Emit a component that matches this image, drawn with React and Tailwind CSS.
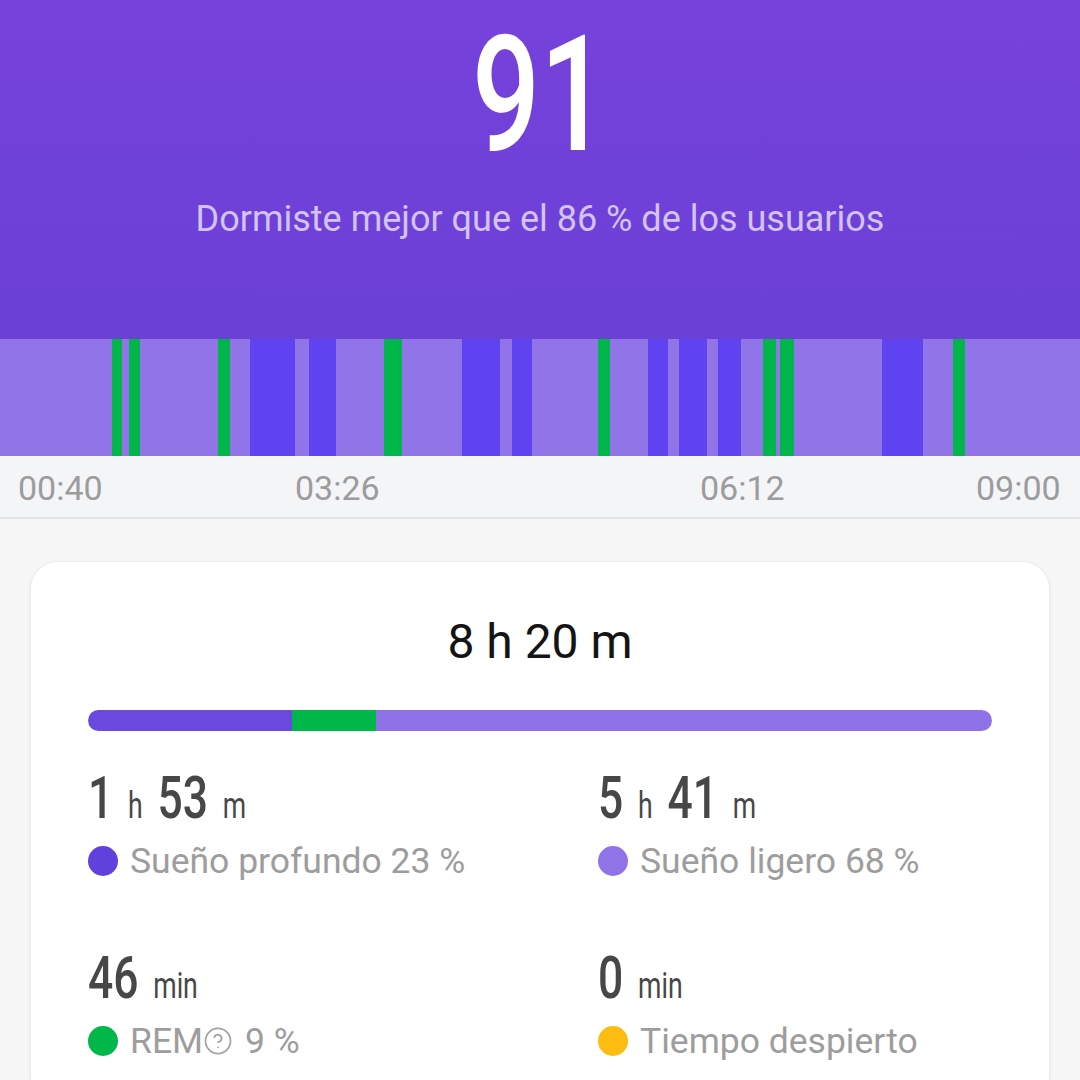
import { CircleHelp } from "lucide-react";

const segments = [
  // [x1, x2, type] along a 1080 wide axis
  [112, 122, "rem"],
  [129, 140, "rem"],
  [218, 230, "rem"],
  [250, 295, "deep"],
  [309, 336, "deep"],
  [384, 402, "rem"],
  [462, 500, "deep"],
  [512, 532, "deep"],
  [598, 610, "rem"],
  [648, 668, "deep"],
  [679, 707, "deep"],
  [718, 741, "deep"],
  [763, 776, "rem"],
  [780, 794, "rem"],
  [882, 923, "deep"],
  [953, 965, "rem"],
];

const colors = { deep: "#5f43f1", rem: "#00b64a" };

const ticks = [
  { label: "00:40", left: 18 },
  { label: "03:26", left: 295 },
  { label: "06:12", left: 700 },
  { label: "09:00", left: 976 },
];

const stats = [
  { parts: [["1", "h"], ["53", "m"]], dot: "bg-[#6041dc]", label: "Sueño profundo 23 %" },
  { parts: [["5", "h"], ["41", "m"]], dot: "bg-[#9173e8]", label: "Sueño ligero 68 %" },
  { parts: [["46", "min"]], dot: "bg-[#00b74a]", label: "REM", rem: true, pct: "9 %" },
  { parts: [["0", "min"]], dot: "bg-[#fdbd10]", label: "Tiempo despierto" },
];

function Duration({ parts }) {
  return (
    <div className="h-[60px] origin-left scale-x-[0.74] whitespace-nowrap leading-[60px] text-[#474747]">
      {parts.map(([num, unit], i) => (
        <span key={i} className={i > 0 ? "ml-[20px]" : ""}>
          <span className="text-[60px] font-medium">{num}</span>
          <span className="ml-[20px] text-[36px]">{unit}</span>
        </span>
      ))}
    </div>
  );
}

export default function App() {
  return (
    <div className="min-h-screen bg-[#f7f7f8] font-['Roboto',sans-serif]">
      <header className="flex h-[339px] flex-col items-center bg-gradient-to-b from-[#7642dc] to-[#6a40d5] pt-[14px]">
        <div className="h-[162px] scale-x-[0.74] text-[162px] font-medium leading-[162px] text-white">91</div>
        <p className="mt-[21px] text-[36px] leading-[44px] text-[#d3c3f6]">
          Dormiste mejor que el 86 % de los usuarios
        </p>
      </header>

      <svg viewBox="0 0 1080 117" preserveAspectRatio="none" className="block h-[117px] w-full">
        <rect x="0" y="0" width="1080" height="117" fill="#9074e8" />
        {segments.map(([a, b, t], i) => (
          <rect key={i} x={a} y="0" width={b - a} height="117" fill={colors[t]} />
        ))}
      </svg>

      <div className="relative h-[63px] border-b-2 border-[#e2e2e4] bg-[#f4f5f7]">
        {ticks.map((t) => (
          <span
            key={t.label}
            className="absolute top-[12px] text-[34px] leading-[40px] text-[#9c9c9c]"
            style={{ left: t.left }}
          >
            {t.label}
          </span>
        ))}
      </div>

      <div className="px-[30px] pt-[42px]">
        <div className="rounded-[28px] border border-[#ececec] bg-white px-[57px] pb-10 pt-[52px] shadow-[0_1px_4px_rgba(0,0,0,0.06)]">
          <h2 className="text-center text-[48px] leading-[56px] text-[#141414]">8 h 20 m</h2>

          <div className="mt-[40px] flex h-[21px] overflow-hidden rounded-full">
            <div className="w-[204px] bg-[#6a4ade]" />
            <div className="w-[84px] bg-[#00b74a]" />
            <div className="flex-1 bg-[#9072e8]" />
          </div>

          <div className="mt-[37px] grid grid-cols-[510px_1fr] gap-y-[66px]">
            {stats.map((s, i) => (
              <div key={i}>
                <Duration parts={s.parts} />
                <div className="mt-[12px] flex items-center gap-[12px]">
                  <span className={`h-[30px] w-[30px] rounded-full ${s.dot}`} />
                  <span className="flex items-center text-[35.5px] leading-[42px] text-[#9d9d9d]">
                    {s.label}
                    {s.rem && (
                      <>
                        <CircleHelp size={30} strokeWidth={1.4} className="mr-[12px] text-[#a3a3a3]" />
                        {s.pct}
                      </>
                    )}
                  </span>
                </div>
              </div>
            ))}
          </div>
        </div>
      </div>
    </div>
  );
}
